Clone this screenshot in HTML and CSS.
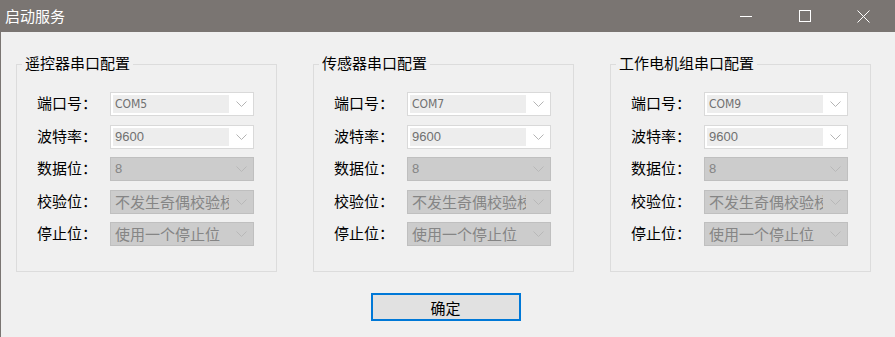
FILE: index.html
```html
<!DOCTYPE html>
<html lang="zh-CN">
<head>
  <meta charset="UTF-8" />
  <title>启动服务</title>
  <link rel="stylesheet" href="styles.css">
</head>
<body>
  <div class="window">
    <div class="titlebar">
      <span class="title">启动服务</span>
      <div class="controls">
        <span class="ctl"><svg width="12" height="12" viewBox="0 0 12 12"><path d="M0 6.5H12" stroke="#fff" fill="none"/></svg></span>
        <span class="ctl"><svg width="12" height="12" viewBox="0 0 12 12"><rect x="0.5" y="0.5" width="11" height="11" stroke="#fff" fill="none"/></svg></span>
        <span class="ctl"><svg width="13" height="13" viewBox="0 0 13 13"><path d="M0.5 0.5L12.5 12.5M12.5 0.5L0.5 12.5" stroke="#fff" fill="none"/></svg></span>
      </div>
    </div>

    <div class="content">
      <div class="groups">
        <section class="group">
          <h3 class="group-title">遥控器串口配置</h3>
          <div class="rows">
            <div class="row"><label>端口号：</label><div class="combo"><span class="value com">COM5</span><svg class="chev" width="11" height="6" viewBox="0 0 11 6"><path d="M0.5 0.5L5.5 5.5L10.5 0.5"/></svg></div></div>
            <div class="row"><label>波特率：</label><div class="combo"><span class="value num">9600</span><svg class="chev" width="11" height="6" viewBox="0 0 11 6"><path d="M0.5 0.5L5.5 5.5L10.5 0.5"/></svg></div></div>
            <div class="row"><label>数据位：</label><div class="combo disabled"><span class="value num">8</span><svg class="chev" width="11" height="6" viewBox="0 0 11 6"><path d="M0.5 0.5L5.5 5.5L10.5 0.5"/></svg></div></div>
            <div class="row"><label>校验位：</label><div class="combo disabled"><span class="value">不发生奇偶校验校验</span><svg class="chev" width="11" height="6" viewBox="0 0 11 6"><path d="M0.5 0.5L5.5 5.5L10.5 0.5"/></svg></div></div>
            <div class="row"><label>停止位：</label><div class="combo disabled"><span class="value">使用一个停止位</span><svg class="chev" width="11" height="6" viewBox="0 0 11 6"><path d="M0.5 0.5L5.5 5.5L10.5 0.5"/></svg></div></div>
          </div>
        </section>

        <section class="group">
          <h3 class="group-title">传感器串口配置</h3>
          <div class="rows">
            <div class="row"><label>端口号：</label><div class="combo"><span class="value com">COM7</span><svg class="chev" width="11" height="6" viewBox="0 0 11 6"><path d="M0.5 0.5L5.5 5.5L10.5 0.5"/></svg></div></div>
            <div class="row"><label>波特率：</label><div class="combo"><span class="value num">9600</span><svg class="chev" width="11" height="6" viewBox="0 0 11 6"><path d="M0.5 0.5L5.5 5.5L10.5 0.5"/></svg></div></div>
            <div class="row"><label>数据位：</label><div class="combo disabled"><span class="value num">8</span><svg class="chev" width="11" height="6" viewBox="0 0 11 6"><path d="M0.5 0.5L5.5 5.5L10.5 0.5"/></svg></div></div>
            <div class="row"><label>校验位：</label><div class="combo disabled"><span class="value">不发生奇偶校验校验</span><svg class="chev" width="11" height="6" viewBox="0 0 11 6"><path d="M0.5 0.5L5.5 5.5L10.5 0.5"/></svg></div></div>
            <div class="row"><label>停止位：</label><div class="combo disabled"><span class="value">使用一个停止位</span><svg class="chev" width="11" height="6" viewBox="0 0 11 6"><path d="M0.5 0.5L5.5 5.5L10.5 0.5"/></svg></div></div>
          </div>
        </section>

        <section class="group">
          <h3 class="group-title">工作电机组串口配置</h3>
          <div class="rows">
            <div class="row"><label>端口号：</label><div class="combo"><span class="value com">COM9</span><svg class="chev" width="11" height="6" viewBox="0 0 11 6"><path d="M0.5 0.5L5.5 5.5L10.5 0.5"/></svg></div></div>
            <div class="row"><label>波特率：</label><div class="combo"><span class="value num">9600</span><svg class="chev" width="11" height="6" viewBox="0 0 11 6"><path d="M0.5 0.5L5.5 5.5L10.5 0.5"/></svg></div></div>
            <div class="row"><label>数据位：</label><div class="combo disabled"><span class="value num">8</span><svg class="chev" width="11" height="6" viewBox="0 0 11 6"><path d="M0.5 0.5L5.5 5.5L10.5 0.5"/></svg></div></div>
            <div class="row"><label>校验位：</label><div class="combo disabled"><span class="value">不发生奇偶校验校验</span><svg class="chev" width="11" height="6" viewBox="0 0 11 6"><path d="M0.5 0.5L5.5 5.5L10.5 0.5"/></svg></div></div>
            <div class="row"><label>停止位：</label><div class="combo disabled"><span class="value">使用一个停止位</span><svg class="chev" width="11" height="6" viewBox="0 0 11 6"><path d="M0.5 0.5L5.5 5.5L10.5 0.5"/></svg></div></div>
          </div>
        </section>
      </div>

      <div class="footer">
        <button class="ok">确定</button>
      </div>
    </div>
  </div>
</body>
</html>
```

FILE: styles.css
```css
body {
  margin: 0;
  width: 895px;
  height: 337px;
  overflow: hidden;
  background: #f0f0f0;
  font-family: "Noto Sans CJK SC", "Noto Sans", sans-serif;
  font-size: 15px;
  color: #000;
}
.window {
  height: 337px;
  box-sizing: border-box;
  border-left: 1px solid #7a7572;
}
.titlebar {
  height: 32px;
  background: #7a7572;
  color: #fff;
  display: flex;
  align-items: center;
  padding-left: 4px;
}
.title {
  font-size: 15px;
  line-height: 20px;
}
.controls {
  margin-left: auto;
  display: flex;
  padding-right: 2px;
}
.ctl {
  width: 59px;
  height: 32px;
  display: flex;
  align-items: center;
  justify-content: center;
}
.ctl svg {
  display: block;
}
.content {
  padding-left: 15px;
}
.groups {
  display: flex;
  gap: 36px;
  padding-top: 32px;
}
.group {
  width: 261px;
  height: 208px;
  box-sizing: border-box;
  border: 1px solid #dcdcdc;
}
.group-title {
  width: fit-content;
  margin: -12px 0 0 5px;
  padding: 0 3px;
  background: #f0f0f0;
  font-size: 15px;
  font-weight: normal;
  line-height: 20px;
}
.rows {
  margin-top: 19px;
  padding-left: 20px;
  display: flex;
  flex-direction: column;
  gap: 8.5px;
}
.row {
  display: flex;
  align-items: center;
  height: 24px;
}
.row label {
  width: 73px;
  line-height: 20px;
  margin-top: -2px;
}
.combo {
  width: 144px;
  height: 24px;
  box-sizing: border-box;
  border: 1px solid #d9d9d9;
  background: #fff;
  display: flex;
  align-items: center;
  padding: 2px;
}
.combo .value {
  width: 114px;
  height: 18px;
  line-height: 18px;
  padding-left: 2px;
  background: #ededed;
  color: #707070;
  overflow: hidden;
  white-space: nowrap;
}
.combo .com {
  font-family: "Liberation Sans Narrow", "DejaVu Sans Condensed", sans-serif;
  font-size: 12px;
}
.combo .num {
  font-family: "Liberation Sans", sans-serif;
  font-size: 13px;
}
.chev {
  display: block;
  margin-left: auto;
  margin-right: 4px;
  fill: none;
  stroke: #b4b4b4;
}
.combo.disabled {
  background: #cccccc;
  border-color: #bfbfbf;
  padding: 1px 2px;
}
.combo.disabled .value {
  height: 20px;
  line-height: 20px;
  background: none;
  color: #858585;
  font-size: 15px;
}
.combo.disabled .num {
  font-size: 13px;
}
.combo.disabled .chev {
  stroke: #b8b8b8;
}
.footer {
  display: flex;
  justify-content: center;
  padding: 21px 20px 0 0;
}
.ok {
  width: 150px;
  height: 28px;
  border: 2px solid #0078d7;
  background: #e1e1e1;
  font-family: "Noto Sans CJK SC", sans-serif;
  font-size: 15px;
  color: #000;
  padding: 0;
}
```
